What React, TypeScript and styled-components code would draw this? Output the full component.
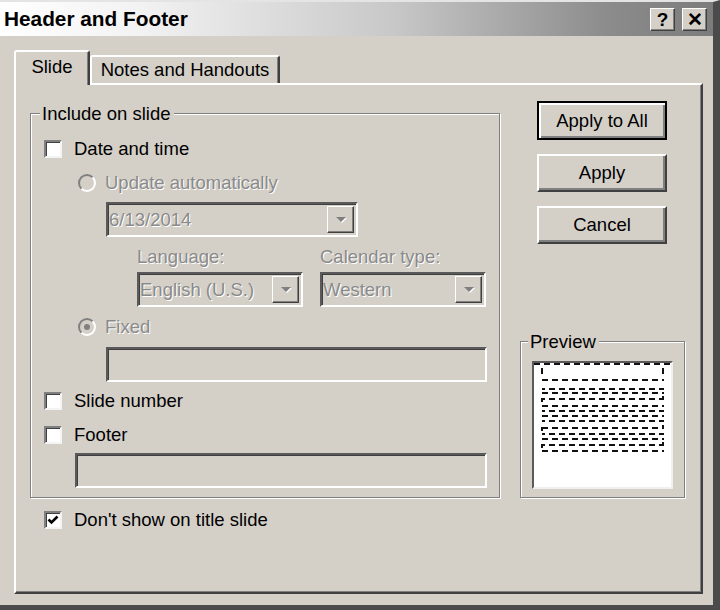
import React from 'react';
import styled, { createGlobalStyle } from 'styled-components';

// Windows classic palette
const face = '#d4d0c8';
const shadow = '#808080';
const darkShadow = '#404040';
const grayText = '#8a8a8a';

const GlobalStyle = createGlobalStyle`
  html, body {
    margin: 0;
    padding: 0;
    background: ${face};
  }
  body {
    font-family: "Liberation Sans", Arial, sans-serif;
    font-size: 18.5px;
    color: #000;
  }
  * {
    box-sizing: border-box;
  }
`;

const Window = styled.div`
  width: 720px;
  height: 610px;
  background: ${face};
  border-top: 2px solid #e4e4e4;
  border-right: 7px solid #4b4b4b;
  border-bottom: 5px solid #4b4b4b;
  display: flex;
  flex-direction: column;
  overflow: hidden;
`;

const TitleBar = styled.div`
  height: 34px;
  display: flex;
  align-items: center;
  padding: 0 6px 0 4px;
  background: linear-gradient(90deg, #ffffff 0%, #f2f2f2 20%, #c8c8c8 55%, #8c8c8c 85%, #7c7c7c 100%);
`;

const Title = styled.div`
  flex: 1;
  font-weight: 700;
  font-size: 20.8px;
`;

const CaptionButton = styled.div`
  width: 25px;
  height: 23px;
  margin-left: 7px;
  background: ${face};
  border: 1px solid;
  border-color: #fff ${darkShadow} ${darkShadow} #fff;
  box-shadow: inset -1px -1px 0 ${shadow};
  display: flex;
  align-items: center;
  justify-content: center;
  font-weight: 700;
  font-size: 19px;
  line-height: 1;
`;

const Body = styled.div`
  flex: 1;
  display: flex;
  flex-direction: column;
  padding: 14px 10px 0 14px;
`;

const TabStrip = styled.div`
  height: 33px;
  display: flex;
  align-items: flex-end;
`;

const Tab = styled.div<{ $active?: boolean }>`
  position: relative;
  z-index: ${(p) => (p.$active ? 1 : 0)};
  height: ${(p) => (p.$active ? '35px' : '28px')};
  margin-bottom: ${(p) => (p.$active ? '-2px' : '0')};
  padding: ${(p) => (p.$active ? '0 12px 3px' : '0 8px 0 8px')};
  width: ${(p) => (p.$active ? '76px' : '190px')};
  background: ${face};
  border-top: 2px solid #fff;
  border-left: 2px solid #fff;
  border-right: 2px solid ${darkShadow};
  border-top-left-radius: 3px;
  border-top-right-radius: 3px;
  box-shadow: inset -1px 0 0 ${shadow};
  display: flex;
  align-items: center;
  justify-content: center;
  white-space: nowrap;
`;

const Panel = styled.div`
  height: 511px;
  border: 2px solid;
  border-color: #fff ${darkShadow} ${darkShadow} #fff;
  box-shadow: inset -1px -1px 0 ${shadow};
  padding: 18px 0 0 14px;
  display: flex;
  flex-direction: column;
`;

const TopRow = styled.div`
  display: flex;
  gap: 20px;
`;

const Group = styled.fieldset<{ $width: number; $padLeft: number; $padBottom: number }>`
  margin: 0;
  width: ${(p) => p.$width}px;
  min-width: 0;
  padding: 0 0 ${(p) => p.$padBottom}px ${(p) => p.$padLeft}px;
  border: 1px solid ${shadow};
  box-shadow: inset 1px 1px 0 #fff, 1px 1px 0 #fff;
  display: flex;
  flex-direction: column;
`;

const Legend = styled.legend`
  margin-left: -4px;
  padding: 0 3px 0 2px;
  line-height: 21px;
  background: ${face};
`;

const Row = styled.div<{ $top: number; $indent?: number }>`
  display: flex;
  align-items: center;
  height: 24px;
  gap: 12px;
  margin-top: ${(p) => p.$top}px;
  margin-left: ${(p) => p.$indent ?? 0}px;
`;

const RadioRow = styled(Row)`
  gap: 9px;
`;

const Label = styled.span<{ $disabled?: boolean }>`
  color: ${(p) => (p.$disabled ? grayText : '#000')};
  text-shadow: ${(p) => (p.$disabled ? '1px 1px 0 #fff' : 'none')};
  white-space: nowrap;
`;

const CheckBox = styled.div`
  width: 18px;
  height: 18px;
  flex: none;
  background: #fff;
  border: 2px solid;
  border-color: ${shadow} #f4f4f4 #f4f4f4 ${shadow};
  box-shadow: inset 1px 1px 0 ${darkShadow};
  display: flex;
  align-items: center;
  justify-content: center;
`;

const Radio = styled.div`
  width: 18px;
  height: 18px;
  flex: none;
  border-radius: 50%;
  background: ${face};
  border: 2px solid;
  border-color: ${shadow} #fff #fff ${shadow};
  display: flex;
  align-items: center;
  justify-content: center;
`;

const RadioDot = styled.div`
  width: 6px;
  height: 6px;
  border-radius: 50%;
  background: ${shadow};
`;

const Field = styled.div<{ $width: number; $top: number; $indent: number }>`
  width: ${(p) => p.$width}px;
  height: 35px;
  margin-top: ${(p) => p.$top}px;
  margin-left: ${(p) => p.$indent}px;
  background: ${face};
  border: 2px solid;
  border-color: #5a5a5a #fff #fff #5a5a5a;
  box-shadow: inset 1px 1px 0 ${darkShadow};
  padding: 2px 2px 2px 1px;
  display: flex;
  align-items: center;
  flex: none;
`;

const FieldText = styled.span`
  flex: 1;
  color: ${grayText};
  text-shadow: 1px 1px 0 #fff;
  white-space: nowrap;
  overflow: hidden;
`;

const DropButton = styled.div`
  width: 27px;
  height: 27px;
  flex: none;
  background: ${face};
  border: 1px solid;
  border-color: #fff ${darkShadow} ${darkShadow} #fff;
  box-shadow: inset -1px -1px 0 ${shadow};
  display: flex;
  align-items: center;
  justify-content: center;
`;

const ComboRow = styled.div`
  display: flex;
  gap: 17px;
  margin-left: 93px;
`;

const ComboColumn = styled.div`
  display: flex;
  flex-direction: column;
`;

const SmallLabel = styled(Label)`
  height: 22px;
  line-height: 22px;
  margin-top: 9px;
`;

const RightColumn = styled.div`
  width: 165px;
  margin-top: -2px;
  display: flex;
  flex-direction: column;
`;

const Buttons = styled.div`
  display: flex;
  flex-direction: column;
  gap: 14px;
  margin-left: 17px;
`;

const PushButton = styled.div<{ $default?: boolean }>`
  width: 130px;
  height: ${(p) => (p.$default ? 39 : 38)}px;
  background: ${face};
  border: 2px solid;
  border-color: ${(p) => (p.$default ? '#000' : `#fff ${darkShadow} ${darkShadow} #fff`)};
  box-shadow: ${(p) =>
    p.$default
      ? `inset 2px 2px 0 #fff, inset -2px -2px 0 ${shadow}`
      : `inset -2px -2px 0 ${shadow}`};
  display: flex;
  align-items: center;
  justify-content: center;
  white-space: nowrap;
`;

const PreviewGroup = styled(Group)`
  margin-top: auto;
`;

const PreviewBox = styled.div`
  width: 141px;
  height: 128px;
  margin-top: 9px;
  background: #fff;
  border: 2px solid;
  border-color: #5a5a5a #f0f0f0 #f0f0f0 #5a5a5a;
`;

const PreviewArt = () => {
  const rows = [17, 26, 30, 36, 43, 48, 53, 58, 65, 71, 76, 82, 88];
  const corners = [36, 65, 82];
  return (
    <svg width="137" height="124" viewBox="0 0 137 124">
      <g stroke="#111" strokeWidth="2" fill="none">
        <line x1="0" y1="1" x2="137" y2="1" strokeDasharray="6 4" />
        <line x1="8" y1="5" x2="8" y2="11" />
        <line x1="129" y1="5" x2="129" y2="11" />
        {rows.map((y, i) => (
          <line
            key={y}
            x1="8"
            y1={y}
            x2="130"
            y2={y}
            strokeDasharray="6 4"
            strokeDashoffset={i % 2 ? 3 : 0}
          />
        ))}
        {corners.map((y) => (
          <g key={`c${y}`}>
            <line x1="8" y1={y - 1} x2="8" y2={y + 3} />
            <line x1="129" y1={y - 3} x2="129" y2={y + 1} />
          </g>
        ))}
      </g>
    </svg>
  );
};

const Arrow = () => (
  <svg width="12" height="8" viewBox="0 0 12 8">
    <polygon points="2,2 12,2 7,7" fill="#fff" />
    <polygon points="1,1 11,1 6,6" fill={shadow} />
  </svg>
);

const Check = () => (
  <svg width="12" height="12" viewBox="0 0 12 12">
    <polyline points="1.5,5.5 4.5,8.5 10.5,2.5" stroke="#000" strokeWidth="2.6" fill="none" />
  </svg>
);

const Combo: React.FC<{ value: string; width: number; top: number; indent: number }> = ({
  value,
  width,
  top,
  indent,
}) => (
  <Field $width={width} $top={top} $indent={indent}>
    <FieldText>{value}</FieldText>
    <DropButton>
      <Arrow />
    </DropButton>
  </Field>
);

const HeaderFooterDialog: React.FC = () => {
  return (
    <>
      <GlobalStyle />
      <Window>
        <TitleBar>
          <Title>Header and Footer</Title>
          <CaptionButton>?</CaptionButton>
          <CaptionButton>✕</CaptionButton>
        </TitleBar>

        <Body>
          <TabStrip>
            <Tab $active>Slide</Tab>
            <Tab>Notes and Handouts</Tab>
          </TabStrip>

          <Panel>
            <TopRow>
              <Group $width={470} $padLeft={13} $padBottom={9}>
                <Legend>Include on slide</Legend>

                <Row $top={13}>
                  <CheckBox />
                  <Label>Date and time</Label>
                </Row>

                <RadioRow $top={10} $indent={34}>
                  <Radio />
                  <Label $disabled>Update automatically</Label>
                </RadioRow>

                <Combo value="6/13/2014" width={252} top={7} indent={62} />

                <ComboRow>
                  <ComboColumn>
                    <SmallLabel $disabled>Language:</SmallLabel>
                    <Combo value="English (U.S.)" width={166} top={4} indent={0} />
                  </ComboColumn>
                  <ComboColumn>
                    <SmallLabel $disabled>Calendar type:</SmallLabel>
                    <Combo value="Western" width={166} top={4} indent={0} />
                  </ComboColumn>
                </ComboRow>

                <RadioRow $top={8} $indent={34}>
                  <Radio>
                    <RadioDot />
                  </Radio>
                  <Label $disabled>Fixed</Label>
                </RadioRow>

                <Field $width={381} $top={8} $indent={62} />

                <Row $top={7}>
                  <CheckBox />
                  <Label>Slide number</Label>
                </Row>

                <Row $top={10}>
                  <CheckBox />
                  <Label>Footer</Label>
                </Row>

                <Field $width={412} $top={6} $indent={31} />
              </Group>

              <RightColumn>
                <Buttons>
                  <PushButton $default>Apply to All</PushButton>
                  <PushButton>Apply</PushButton>
                  <PushButton>Cancel</PushButton>
                </Buttons>

                <PreviewGroup $width={165} $padLeft={11} $padBottom={8}>
                  <Legend>Preview</Legend>
                  <PreviewBox>
                    <PreviewArt />
                  </PreviewBox>
                </PreviewGroup>
              </RightColumn>
            </TopRow>

            <Row $top={10} $indent={14}>
              <CheckBox>
                <Check />
              </CheckBox>
              <Label>Don't show on title slide</Label>
            </Row>
          </Panel>
        </Body>
      </Window>
    </>
  );
};

export default HeaderFooterDialog;
